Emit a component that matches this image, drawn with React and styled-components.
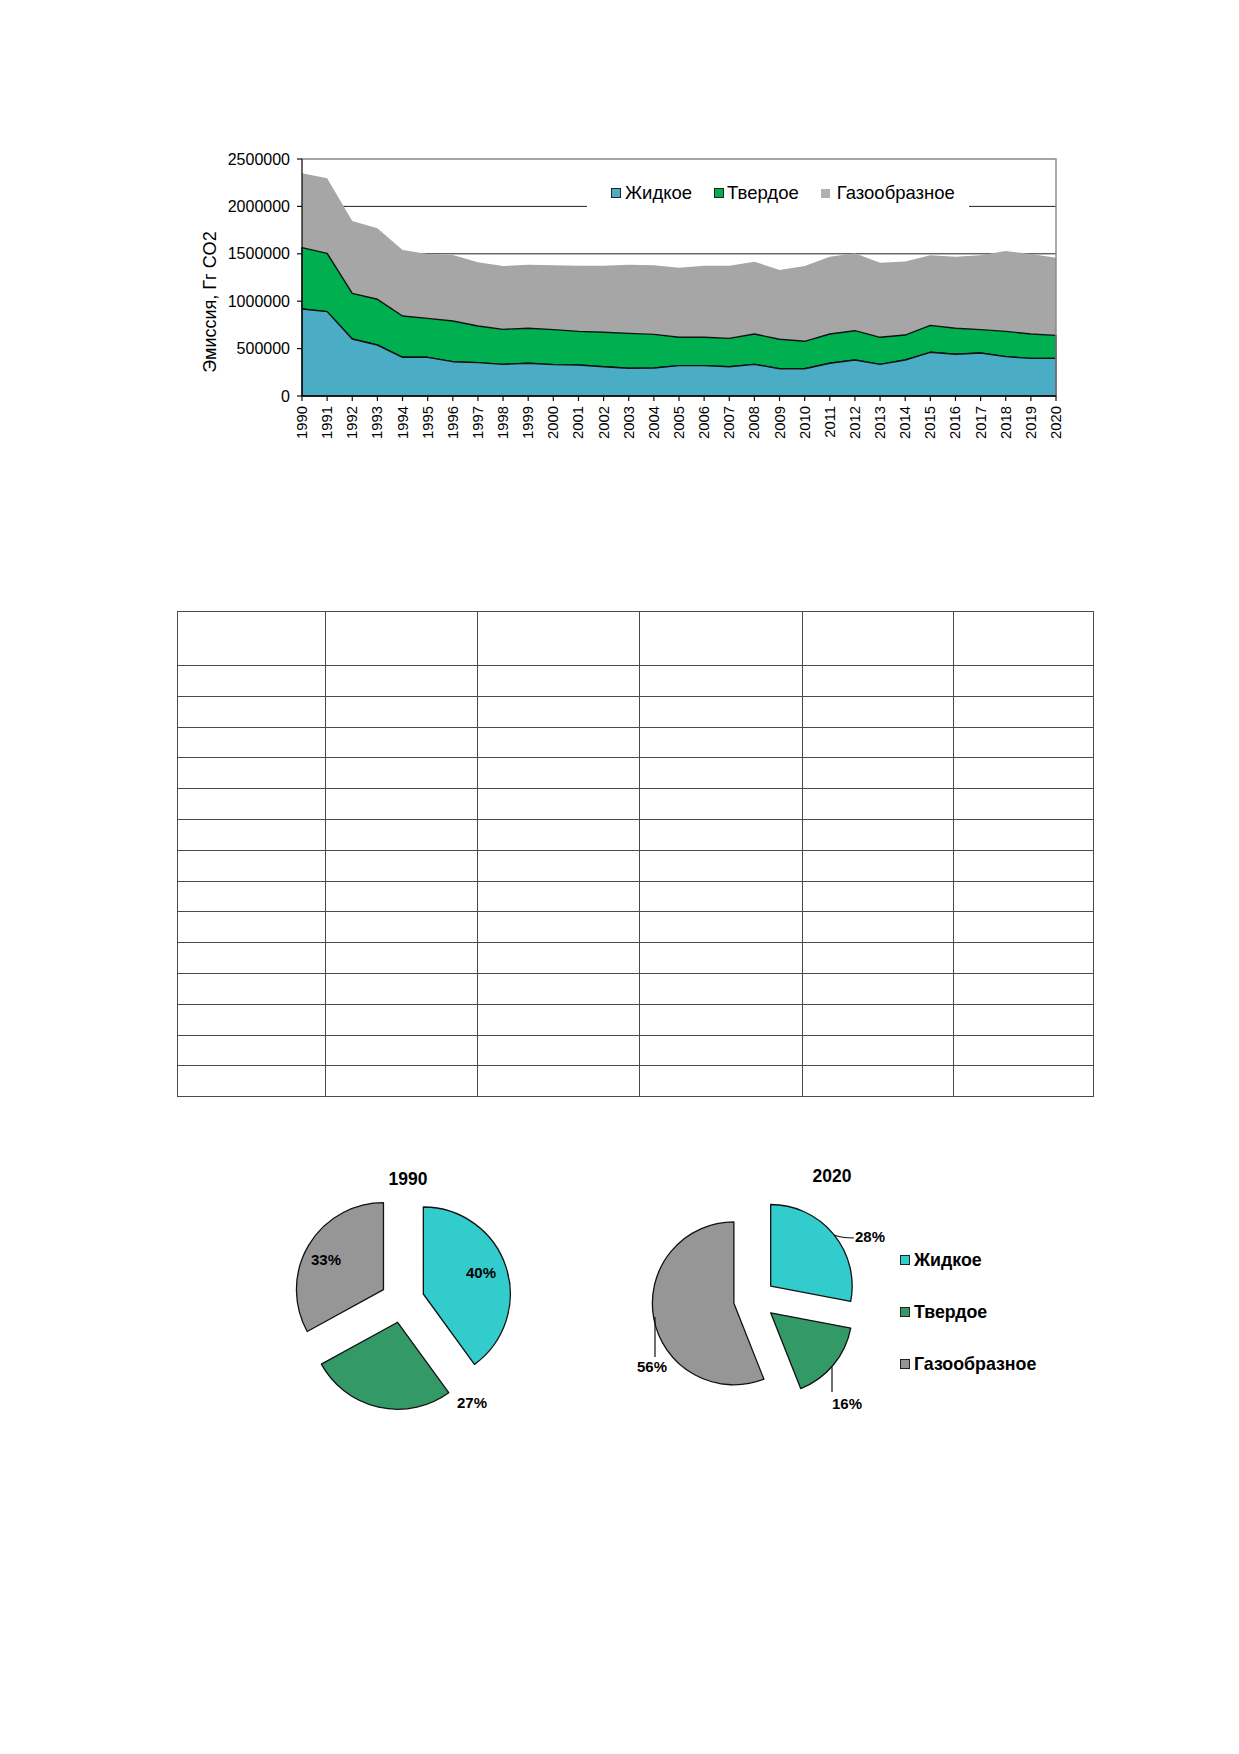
import React from 'react';
import styled, { createGlobalStyle } from 'styled-components';

const GlobalStyle = createGlobalStyle`
    body {
        margin: 0;
        background: #fff;
        font-family: "Liberation Sans", Arial, sans-serif;
        color: #000;
    }
`;

const palette = {
    liquid: '#4bacc6',
    solid: '#00b050',
    gas: '#a6a6a6',
    pieLiquid: '#33cccc',
    pieSolid: '#339966',
    pieGas: '#969696',
};

// emissions in thousand Gg CO2, cumulative tops of each stacked area
const years = Array.from({ length: 31 }, (_, i) => 1990 + i);
const liquidTop = [918, 890, 601, 538, 408, 408, 362, 352, 334, 345, 331, 327, 309, 292, 295, 320, 320, 309, 334, 288, 288, 345, 380, 334, 380, 461, 440, 454, 415, 397, 397];
const solidTop = [1565, 1505, 1083, 1020, 844, 819, 791, 738, 703, 714, 700, 682, 672, 661, 650, 619, 619, 608, 654, 598, 577, 654, 689, 619, 643, 745, 714, 700, 682, 654, 640];
const gasTop = [2349, 2296, 1846, 1769, 1540, 1498, 1487, 1410, 1371, 1385, 1378, 1375, 1375, 1385, 1378, 1354, 1375, 1375, 1417, 1329, 1371, 1470, 1505, 1406, 1420, 1484, 1470, 1484, 1530, 1498, 1459];

const plot = { left: 302, right: 1056, top: 159, bottom: 396 };
const xAt = i => plot.left + (i * (plot.right - plot.left)) / 30;
const yAt = v => plot.bottom - (v * (plot.bottom - plot.top)) / 2500;

const columnWidths = [147, 151, 161, 162, 150, 139];

const Page = styled.div`
    width: 1239px;
    min-height: 1754px;
    padding-top: 140px;
    box-sizing: border-box;
`;

const ChartFigure = styled.div`
    position: relative;
    width: 900px;
    height: 310px;
    margin-left: 180px;

    & svg {
        display: block;
    }
`;

const ChartLegend = styled.div`
    position: absolute;
    left: 407px;
    top: 39px;
    width: 382px;
    height: 30px;
    box-sizing: border-box;
    padding: 4px 0 0 24px;
    background: #fff;
    display: flex;
    align-items: flex-start;
    gap: 22px;
    font-size: 18.5px;
    line-height: 20px;
`;

const LegendEntry = styled.div`
    display: flex;
    align-items: center;
    gap: ${p => p.$gap || 4}px;
    white-space: nowrap;
`;

const Swatch = styled.span`
    display: inline-block;
    width: ${p => p.$size || 10}px;
    height: ${p => p.$size || 10}px;
    box-sizing: border-box;
    background: ${p => p.$color};
    border: ${p => (p.$plain ? 'none' : '1px solid #222')};
`;

const Grid = styled.table`
    margin: 161px 0 0 177px;
    width: 910px;
    border-collapse: collapse;
    table-layout: fixed;

    & td {
        border: 1.5px solid #4a4a4a;
        padding: 0;
        height: 29.8px;
    }

    & tr:first-child td {
        height: 53px;
    }
`;

const PieRow = styled.div`
    display: flex;
    align-items: flex-start;
    margin: 53px 0 0 270px;

    & svg {
        display: block;
        flex: none;
    }
`;

const PieLegend = styled.div`
    display: flex;
    flex-direction: column;
    gap: 32px;
    margin: 100px 0 0 10px;
    font-size: 17.8px;
    font-weight: bold;
    line-height: 20px;
`;

const AreaChart = () => {
    const line = arr => arr.map((v, i) => `${xAt(i)},${yAt(v)}`).join(' ');
    const back = arr =>
        arr
            .map((v, i) => `${xAt(i)},${yAt(v)}`)
            .reverse()
            .join(' ');
    const base = `${plot.right},${plot.bottom} ${plot.left},${plot.bottom}`;

    return (
        <svg width="900" height="310" viewBox="180 140 900 310" fontFamily='"Liberation Sans", Arial, sans-serif'>
            {[500, 1000, 1500, 2000].map(v => (
                <line key={v} x1={plot.left} x2={plot.right} y1={yAt(v)} y2={yAt(v)} stroke="#222" strokeWidth="1" />
            ))}
            <polygon points={`${line(gasTop)} ${back(solidTop)}`} fill={palette.gas} />
            <polygon points={`${line(solidTop)} ${back(liquidTop)}`} fill={palette.solid} stroke="#111" strokeWidth="1.4" strokeLinejoin="round" />
            <polygon points={`${line(liquidTop)} ${base}`} fill={palette.liquid} stroke="#111" strokeWidth="1.4" strokeLinejoin="round" />
            <polyline
                points={`${plot.left},${plot.top} ${plot.right},${plot.top} ${plot.right},${plot.bottom}`}
                fill="none"
                stroke="#888"
                strokeWidth="1.4"
            />
            <line x1={plot.left} x2={plot.left} y1={plot.top} y2={plot.bottom} stroke="#111" strokeWidth="1.3" />
            <line x1={plot.left} x2={plot.right} y1={plot.bottom} y2={plot.bottom} stroke="#111" strokeWidth="1.3" />
            {[0, 500, 1000, 1500, 2000, 2500].map(v => (
                <g key={v}>
                    <line x1={plot.left - 5} x2={plot.left} y1={yAt(v)} y2={yAt(v)} stroke="#111" strokeWidth="1.2" />
                    <text x="290" y={yAt(v)} fontSize="16" textAnchor="end" dominantBaseline="central">
                        {v * 1000}
                    </text>
                </g>
            ))}
            {years.map((year, i) => (
                <g key={year}>
                    <line x1={xAt(i)} x2={xAt(i)} y1={plot.bottom} y2={plot.bottom + 5} stroke="#111" strokeWidth="1.2" />
                    <text
                        x={xAt(i)}
                        y="406"
                        fontSize="14.8"
                        textAnchor="end"
                        dominantBaseline="central"
                        transform={`rotate(-90 ${xAt(i)} 406)`}>
                        {year}
                    </text>
                </g>
            ))}
            <text x="210" y="302" fontSize="18" textAnchor="middle" dominantBaseline="central" transform="rotate(-90 210 302)">
                Эмиссия, Гг CO2
            </text>
        </svg>
    );
};

const pointAt = (cx, cy, r, deg) => {
    const a = (deg * Math.PI) / 180;
    return [cx + r * Math.sin(a), cy - r * Math.cos(a)];
};

const Pie = ({ cx, cy, r, explode, shares }) => {
    let start = 0;
    return shares.map(({ value, color }) => {
        const sweep = value * 3.6;
        const end = start + sweep;
        const [ax, ay] = pointAt(cx, cy, explode, start + sweep / 2);
        const [x0, y0] = pointAt(ax, ay, r, start);
        const [x1, y1] = pointAt(ax, ay, r, end);
        const d = `M${ax},${ay} L${x0},${y0} A${r},${r} 0 ${sweep > 180 ? 1 : 0} 1 ${x1},${y1} Z`;
        start = end;
        return <path key={color} d={d} fill={color} stroke="#111" strokeWidth="1.3" strokeLinejoin="round" />;
    });
};

const PieLabel = ({ x, y, children }) => (
    <text x={x} y={y} fontSize="15" fontWeight="bold" textAnchor="middle" dominantBaseline="central">
        {children}
    </text>
);

const PieTitle = ({ x, y, children }) => (
    <text x={x} y={y} fontSize="17.5" fontWeight="bold" textAnchor="middle" dominantBaseline="central">
        {children}
    </text>
);

const App = () => (
    <Page>
        <GlobalStyle />
        <ChartFigure>
            <AreaChart />
            <ChartLegend>
                <LegendEntry>
                    <Swatch $color={palette.liquid} />
                    Жидкое
                </LegendEntry>
                <LegendEntry $gap={3}>
                    <Swatch $color={palette.solid} />
                    Твердое
                </LegendEntry>
                <LegendEntry $gap={7}>
                    <Swatch $color="#b0b0b0" $size={9} $plain />
                    Газообразное
                </LegendEntry>
            </ChartLegend>
        </ChartFigure>

        <Grid>
            <tbody>
                {Array.from({ length: 15 }, (_, row) => (
                    <tr key={row}>
                        {columnWidths.map((w, col) => (
                            <td key={col} style={row === 0 ? { width: w } : undefined} />
                        ))}
                    </tr>
                ))}
            </tbody>
        </Grid>

        <PieRow>
            <svg width="270" height="280" viewBox="270 1150 270 280" fontFamily='"Liberation Sans", Arial, sans-serif'>
                <PieTitle x="408" y="1179">1990</PieTitle>
                <Pie
                    cx={402.4}
                    cy={1300.8}
                    r={87}
                    explode={22}
                    shares={[
                        { value: 40, color: palette.pieLiquid },
                        { value: 27, color: palette.pieSolid },
                        { value: 33, color: palette.pieGas },
                    ]}
                />
                <PieLabel x="481" y="1272">40%</PieLabel>
                <PieLabel x="326" y="1259">33%</PieLabel>
                <PieLabel x="472" y="1402">27%</PieLabel>
            </svg>
            <svg width="260" height="280" viewBox="630 1150 260 280" fontFamily='"Liberation Sans", Arial, sans-serif' style={{ marginLeft: 90 }}>
                <PieTitle x="832" y="1176">2020</PieTitle>
                <Pie
                    cx={754.5}
                    cy={1299.4}
                    r={81.5}
                    explode={21}
                    shares={[
                        { value: 28, color: palette.pieLiquid },
                        { value: 16, color: palette.pieSolid },
                        { value: 56, color: palette.pieGas },
                    ]}
                />
                <path d="M834,1235 Q841,1238 854,1238" fill="none" stroke="#111" strokeWidth="1.2" />
                <line x1="832" x2="832" y1="1367" y2="1392" stroke="#111" strokeWidth="1.2" />
                <line x1="655" x2="655" y1="1317" y2="1357" stroke="#111" strokeWidth="1.2" />
                <PieLabel x="870" y="1236">28%</PieLabel>
                <PieLabel x="847" y="1403">16%</PieLabel>
                <PieLabel x="652" y="1366">56%</PieLabel>
            </svg>
            <PieLegend>
                <LegendEntry>
                    <Swatch $color={palette.pieLiquid} />
                    Жидкое
                </LegendEntry>
                <LegendEntry>
                    <Swatch $color={palette.pieSolid} />
                    Твердое
                </LegendEntry>
                <LegendEntry>
                    <Swatch $color={palette.pieGas} />
                    Газообразное
                </LegendEntry>
            </PieLegend>
        </PieRow>
    </Page>
);

export default App;
